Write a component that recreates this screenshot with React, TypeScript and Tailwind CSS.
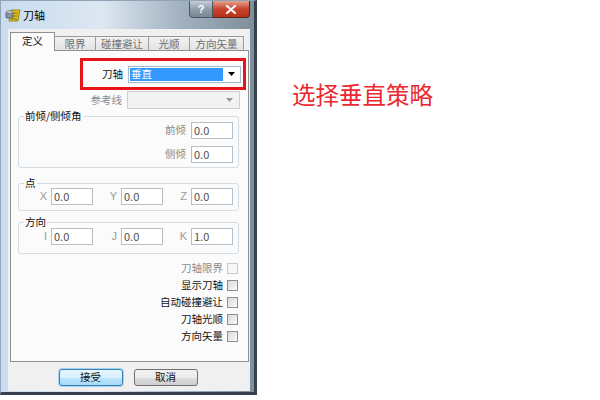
import React from 'react';

const cjk = "font-['Noto_Sans_CJK_SC','Microsoft_YaHei',sans-serif]";

function Field({ value }: { value: string }) {
  return (
    <div className="h-[17px] w-[42px] border border-[#b7bec6] bg-white pl-[2px] flex items-center text-[11px] leading-none text-[#505050]">
      {value}
    </div>
  );
}

function Cell({ label, value }: { label: string; value: string }) {
  return (
    <div className="w-[70px] flex items-center justify-end gap-[4px]">
      <span className="text-[11px] leading-none text-[#9a9a9a] font-['Liberation_Sans',sans-serif]">{label}</span>
      <Field value={value} />
    </div>
  );
}

function Check({ label, disabled }: { label: string; disabled?: boolean }) {
  return (
    <div className="h-[17px] flex items-center justify-end gap-[4px]">
      <span className={`text-[10.5px] leading-none ${disabled ? 'text-[#8c8c8c]' : 'text-[#111]'}`}>{label}</span>
      <div
        className={`w-[11px] h-[11px] border ${
          disabled ? 'border-[#c9c9c9] bg-[#f7f7f7]' : 'border-[#8e8f8f] bg-[linear-gradient(135deg,#d9d9d9,#fafafa)]'
        }`}
      />
    </div>
  );
}

function Arrow({ color }: { color: string }) {
  return (
    <svg width="7" height="4" viewBox="0 0 7 4">
      <path d="M0 0 H7 L3.5 4 Z" fill={color} />
    </svg>
  );
}

function TitleIcon() {
  return (
    <svg width="16" height="16" viewBox="0 0 16 16">
      <path d="M6 3 L15 3 L13 14 L4 14 Z" fill="#e2c21c" stroke="#8a7410" strokeWidth="0.8" />
      <path d="M7 6 L13 6 M6.5 9 L12.5 9 M6 12 L12 12" stroke="#6b5a0a" strokeWidth="0.8" />
      <rect x="1" y="5" width="7" height="6" rx="1" fill="#8d959c" stroke="#4f575e" strokeWidth="0.8" />
      <ellipse cx="4.5" cy="5.2" rx="3.5" ry="1.4" fill="#c9cfd4" stroke="#4f575e" strokeWidth="0.6" />
    </svg>
  );
}

const tabs = [
  { label: '定义', w: 'w-[45px]', active: true },
  { label: '限界', w: 'w-[42px]' },
  { label: '碰撞避让', w: 'w-[54px]' },
  { label: '光顺', w: 'w-[42px]' },
  { label: '方向矢量', w: 'w-[55px]' },
];

export default function App() {
  return (
    <div className={`w-[600px] h-[400px] bg-white flex items-start ${cjk}`}>
      {/* dialog window */}
      <div className="w-[257px] h-[395px] flex flex-col border-l border-t border-[#8fa4b8] border-r-[3px] border-b-[3px] border-r-[#35414c] border-b-[#35414c] bg-[linear-gradient(90deg,#c9dcef_0%,#dce7f2_40%,#a4b3c1_70%,#7f8e9b_100%)]">
        {/* title bar */}
        <div className="h-[28px] flex items-start">
          <div className="flex items-center gap-[2px] pl-[4px] pt-[6px]">
            <TitleIcon />
            <span className="text-[11px] leading-none text-black">刀轴</span>
          </div>
          <div className="ml-auto mr-[4px] flex">
            <div className="w-[24px] h-[17px] rounded-bl-[4px] border border-t-0 border-[#4d5864] bg-[linear-gradient(180deg,#c6ced6,#8e9aa6_55%,#7a8794)] flex items-center justify-center text-white text-[11px] font-bold font-['Liberation_Sans',sans-serif] leading-none">
              ?
            </div>
            <div className="w-[37px] h-[17px] rounded-br-[4px] border border-t-0 border-l-0 border-[#5b2218] bg-[linear-gradient(180deg,#e5a48f,#c8452c_50%,#b5331c)] flex items-center justify-center">
              <svg width="10" height="9" viewBox="0 0 10 9">
                <path d="M1 1 L9 8 M9 1 L1 8" stroke="white" strokeWidth="2.2" strokeLinecap="round" />
              </svg>
            </div>
          </div>
        </div>

        {/* client area */}
        <div className="ml-[7px] w-[242px] h-[362px] bg-[#f0f0f0] flex flex-col px-[2px] pt-[3px]">
          {/* tabs */}
          <div className="h-[18px] flex items-end">
            {tabs.map((t, i) => (
              <div
                key={t.label}
                className={`${t.w} flex items-center justify-center text-[10.5px] leading-none border border-b-0 ${i > 0 ? '-ml-[1px]' : ''} ${
                  t.active
                    ? 'relative z-10 h-[19px] -mb-[1px] bg-[#fbfbfb] border-[#8e8f8f] text-[#111] pb-[1px]'
                    : 'h-[14px] bg-[linear-gradient(180deg,#f2f2f2,#e3e3e3)] border-[#9a9a9a] text-[#6e6e6e] pt-[1px]'
                }`}
              >
                {t.label}
              </div>
            ))}
          </div>

          {/* tab panel */}
          <div className="w-[239px] h-[312px] border border-[#8e8f8f] bg-[#fbfbfb] flex flex-col">
            {/* 刀轴 selector, highlighted */}
            <div className="mt-[7px] ml-[69px] w-[166px] h-[32px] border-[3px] border-[#e8141c] flex items-center justify-end gap-[5px] pr-[2px]">
              <span className="text-[10.5px] leading-none text-[#111]">刀轴</span>
              <div className="w-[113px] h-[17px] border border-[#a9b9cb] bg-white flex items-center p-[1px]">
                <div className="w-[93px] h-full bg-[#3399ff] text-white text-[10.5px] leading-none flex items-center pl-[1px]">垂直</div>
                <div className="flex-1 flex justify-center">
                  <Arrow color="#000" />
                </div>
              </div>
            </div>

            {/* 参考线 */}
            <div className="mt-[1px] h-[18px] flex items-center justify-end gap-[5px] pr-[8px]">
              <span className="text-[10.5px] leading-none text-[#8c8c8c]">参考线</span>
              <div className="w-[113px] h-[18px] border border-[#cfcfcf] bg-[#f2f2f2] flex items-center justify-end pr-[6px]">
                <Arrow color="#9a9a9a" />
              </div>
            </div>

            {/* 前倾/侧倾角 */}
            <fieldset className="mt-[1px] ml-[7px] w-[221px] border border-[#d3dde5] rounded-[3px] pr-[5px] pb-[4px]">
              <legend className="ml-[5px] px-[1px] text-[10.5px] leading-[12px] text-[#111]">前倾/侧倾角</legend>
              <div className="flex flex-col gap-[7px]">
                <div className="flex items-center justify-end gap-[5px]">
                  <span className="text-[10.5px] leading-none text-[#8c8c8c]">前倾</span>
                  <Field value="0.0" />
                </div>
                <div className="flex items-center justify-end gap-[5px]">
                  <span className="text-[10.5px] leading-none text-[#8c8c8c]">侧倾</span>
                  <Field value="0.0" />
                </div>
              </div>
            </fieldset>

            {/* 点 */}
            <fieldset className="mt-[9px] ml-[7px] w-[221px] border border-[#d3dde5] rounded-[3px] pr-[5px] pb-[5px]">
              <legend className="ml-[5px] px-[1px] text-[10.5px] leading-[12px] text-[#111]">点</legend>
              <div className="-mt-[1px] flex justify-end">
                <Cell label="X" value="0.0" />
                <Cell label="Y" value="0.0" />
                <Cell label="Z" value="0.0" />
              </div>
            </fieldset>

            {/* 方向 */}
            <fieldset className="mt-[5px] ml-[7px] w-[221px] border border-[#d3dde5] rounded-[3px] pr-[5px] pb-[8px]">
              <legend className="ml-[5px] px-[1px] text-[10.5px] leading-[12px] text-[#111]">方向</legend>
              <div className="flex justify-end">
                <Cell label="I" value="0.0" />
                <Cell label="J" value="0.0" />
                <Cell label="K" value="1.0" />
              </div>
            </fieldset>

            {/* options */}
            <div className="mt-[6px] pr-[10px] flex flex-col">
              <Check label="刀轴限界" disabled />
              <Check label="显示刀轴" />
              <Check label="自动碰撞避让" />
              <Check label="刀轴光顺" />
              <Check label="方向矢量" />
            </div>
          </div>

          {/* buttons */}
          <div className="mt-[7px] flex justify-center gap-[11px] pr-[2px]">
            <button className="w-[64px] h-[17px] rounded-[3px] border border-[#3c7fb1] shadow-[0_0_0_1px_#9fd4f5] bg-[linear-gradient(180deg,#eaf6fd,#d9f0fc_50%,#bee6fd_51%,#a7d9f5)] text-[10.5px] leading-none text-[#111] flex items-center justify-center">
              接受
            </button>
            <button className="w-[64px] h-[17px] rounded-[3px] border border-[#707070] bg-[linear-gradient(180deg,#f2f2f2,#ebebeb_50%,#dddddd_51%,#cfcfcf)] text-[10.5px] leading-none text-[#111] flex items-center justify-center">
              取消
            </button>
          </div>
        </div>
      </div>

      {/* annotation */}
      <div className="ml-[35px] mt-[80px] text-[23.5px] leading-[28px] text-[#ec2730]">选择垂直策略</div>
    </div>
  );
}
